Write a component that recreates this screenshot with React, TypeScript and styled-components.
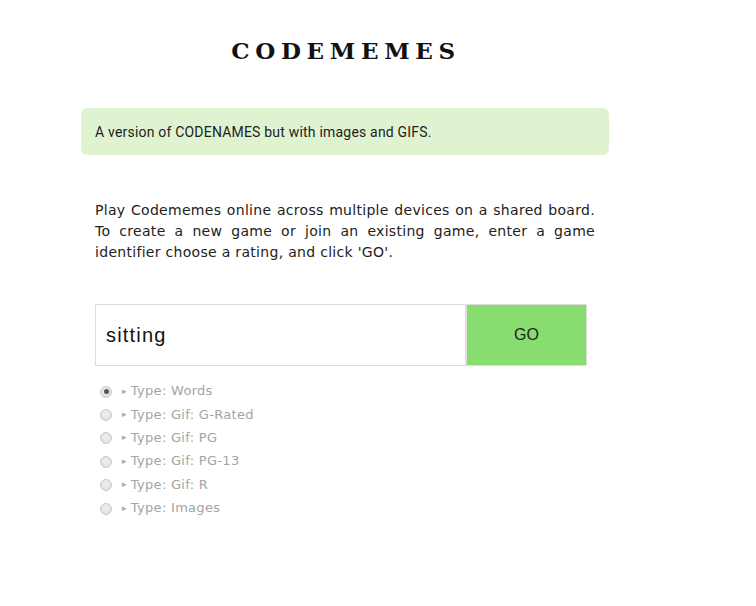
import { useState } from "react";
import styled, { createGlobalStyle } from "styled-components";

const GlobalStyle = createGlobalStyle`
  body {
    margin: 0;
    background: #fff;
    font-family: "DejaVu Sans", Verdana, sans-serif;
  }
`;

const Page = styled.div`
  width: 528px;
  margin-left: 81px;
  padding-top: 36px;
`;

const Title = styled.h1`
  margin: 0;
  text-align: center;
  font-family: "DejaVu Serif", "Courier New", serif;
  font-weight: bold;
  font-size: 23px;
  letter-spacing: 5.7px;
  line-height: 30px;
  color: #111;
  padding-left: 2px;
`;

const Banner = styled.div`
  margin-top: 42px;
  height: 47px;
  box-sizing: border-box;
  padding: 0 14px;
  display: flex;
  align-items: center;
  background: #dff3d0;
  border-radius: 6px;
  font-family: Roboto, "Liberation Sans", sans-serif;
  font-size: 14px;
  letter-spacing: 0.2px;
  color: #222;
`;

const Intro = styled.p`
  margin: 45px 14px 0;
  font-size: 14px;
  line-height: 21px;
  letter-spacing: 0.3px;
  text-align: justify;
  color: #222;
`;

const GameForm = styled.form`
  margin: 41px 14px 0;
  display: flex;
  height: 62px;
`;

const GameInput = styled.input`
  width: 372px;
  box-sizing: border-box;
  border: 1px solid #ddd;
  border-right: 2px solid #ddd;
  padding: 0 10px;
  font-family: "Liberation Sans", Arial, sans-serif;
  font-size: 20px;
  letter-spacing: 1.2px;
  color: #111;
  outline: none;
`;

const GoButton = styled.button`
  width: 120px;
  box-sizing: border-box;
  border: 1px solid #ddd;
  border-left: none;
  background: #88dd70;
  font-family: "Liberation Sans", Arial, sans-serif;
  font-size: 16px;
  color: #222;
  cursor: pointer;
`;

const RatingList = styled.div`
  margin: 13px 14px 0;
  display: flex;
  flex-direction: column;
`;

const RatingRow = styled.label`
  display: flex;
  align-items: center;
  height: 23.4px;
  font-size: 13px;
  letter-spacing: 0.3px;
  color: #a4a4a4;
`;

const Radio = styled.input`
  appearance: none;
  box-sizing: border-box;
  margin: 2px 10px 0 5px;
  width: 12px;
  height: 12px;
  border-radius: 50%;
  border: 1px solid #c8c8c8;
  background: radial-gradient(circle at 50% 40%, #f0f0f0, #dcdcdc);
  position: relative;

  &:checked::after {
    content: "";
    position: absolute;
    left: 2.5px;
    top: 2.5px;
    width: 5px;
    height: 5px;
    border-radius: 50%;
    background: #555;
  }
`;

const Arrow = styled.span`
  font-size: 9px;
  margin-right: 4px;
  color: #aaa;
`;

const ratings = [
  "Type: Words",
  "Type: Gif: G-Rated",
  "Type: Gif: PG",
  "Type: Gif: PG-13",
  "Type: Gif: R",
  "Type: Images",
];

export default function App() {
  const [game, setGame] = useState("sitting");
  const [rating] = useState(0);

  return (
    <>
      <GlobalStyle />
      <Page>
        <Title>CODEMEMES</Title>
        <Banner>A version of CODENAMES but with images and GIFS.</Banner>
        <Intro>
          Play Codememes online across multiple devices on a shared board. To
          create a new game or join an existing game, enter a game identifier
          choose a rating, and click 'GO'.
        </Intro>
        <GameForm onSubmit={(e) => e.preventDefault()}>
          <GameInput value={game} onChange={(e) => setGame(e.target.value)} />
          <GoButton type="submit">GO</GoButton>
        </GameForm>
        <RatingList>
          {ratings.map((r, i) => (
            <RatingRow key={r}>
              <Radio type="radio" name="rating" disabled checked={i === rating} readOnly />
              <Arrow>▸</Arrow>
              {r}
            </RatingRow>
          ))}
        </RatingList>
      </Page>
    </>
  );
}
